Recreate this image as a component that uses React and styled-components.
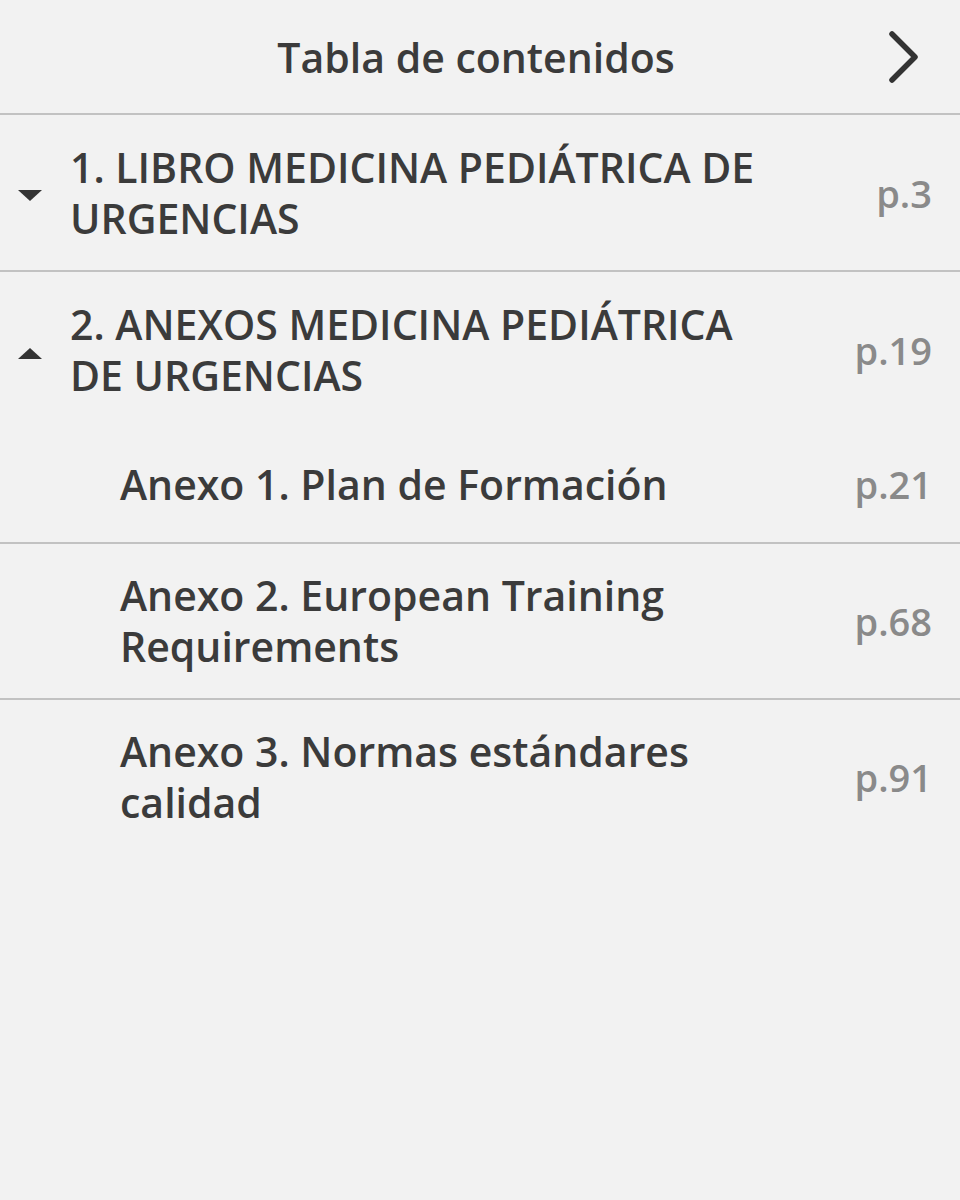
import React from "react";
import styled, { createGlobalStyle } from "styled-components";

const GlobalStyle = createGlobalStyle`
  html, body {
    margin: 0;
    padding: 0;
    background: #f2f2f2;
  }
  body {
    font-family: "Open Sans", "Noto Sans", "Liberation Sans", sans-serif;
    color: #3b3b3b;
  }
`;

const Page = styled.div`
  width: 960px;
  min-height: 1200px;
  background: #f2f2f2;
  font-family: "Open Sans", "Noto Sans", "Liberation Sans", sans-serif;
  font-weight: 600;
`;

const Header = styled.header`
  height: 113px;
  display: grid;
  grid-template-columns: 1fr auto 1fr;
  align-items: center;
  border-bottom: 2px solid #c2c2c2;
`;

const HeaderTitle = styled.h1`
  grid-column: 2;
  margin: 0 8px 0 0;
  font-size: 41px;
  font-weight: 600;
  color: #3b3b3b;
`;

const NextButton = styled.button`
  grid-column: 3;
  justify-self: end;
  margin-right: 36px;
  padding: 0;
  border: 0;
  background: transparent;
  display: flex;
  color: #333333;
`;

const List = styled.div`
  display: flex;
  flex-direction: column;
`;

const Row = styled.div`
  display: grid;
  grid-template-columns: ${(p) => (p.$sub ? "120px" : "70px")} 1fr 130px;
  align-items: center;
  box-sizing: border-box;
  padding: ${(p) => p.$pad || "27px 0 26px"};
  padding-right: 28px;
  border-bottom: ${(p) => (p.$divider ? "2px solid #c2c2c2" : "none")};
`;

const Caret = styled.span`
  display: flex;
  margin-left: 18px;
  margin-top: 6px;
  color: #333333;
`;

const Title = styled.div`
  font-size: 41px;
  line-height: 51px;
  font-weight: 600;
  color: #3b3b3b;
  max-width: 705px;
`;

const PageNum = styled.div`
  justify-self: end;
  font-size: 38px;
  line-height: 51px;
  font-weight: 600;
  color: #8a8a8a;
`;

const SubList = styled.div`
  display: flex;
  flex-direction: column;
`;

const Down = () => (
  <svg width="24" height="12" viewBox="0 0 24 12">
    <polygon points="0,0 24,0 12,11" fill="currentColor" />
  </svg>
);

const Up = () => (
  <svg width="24" height="12" viewBox="0 0 24 12">
    <polygon points="0,12 24,12 12,1" fill="currentColor" />
  </svg>
);

const Chevron = () => (
  <svg width="40" height="60" viewBox="0 0 40 60">
    <path
      d="M8 7 L31 30 L8 53"
      fill="none"
      stroke="currentColor"
      strokeWidth="5.5"
      strokeLinecap="round"
      strokeLinejoin="round"
    />
  </svg>
);

export default function App() {
  return (
    <>
      <GlobalStyle />
      <Page>
        <Header>
          <HeaderTitle>Tabla de contenidos</HeaderTitle>
          <NextButton aria-label="Siguiente">
            <Chevron />
          </NextButton>
        </Header>
        <List>
          <Row $divider>
            <Caret>
              <Down />
            </Caret>
            <Title>1. LIBRO MEDICINA PEDIÁTRICA DE URGENCIAS</Title>
            <PageNum>p.3</PageNum>
          </Row>
          <Row $pad="27px 0 31px">
            <Caret>
              <Up />
            </Caret>
            <Title>2. ANEXOS MEDICINA PEDIÁTRICA DE URGENCIAS</Title>
            <PageNum>p.19</PageNum>
          </Row>
          <SubList>
            <Row $sub $divider $pad="27px 0 32px">
              <span />
              <Title>Anexo 1. Plan de Formación</Title>
              <PageNum>p.21</PageNum>
            </Row>
            <Row $sub $divider $pad="26px 0 26px">
              <span />
              <Title>Anexo 2. European Training Requirements</Title>
              <PageNum>p.68</PageNum>
            </Row>
            <Row $sub $pad="26px 0 26px">
              <span />
              <Title>Anexo 3. Normas estándares calidad</Title>
              <PageNum>p.91</PageNum>
            </Row>
          </SubList>
        </List>
      </Page>
    </>
  );
}
